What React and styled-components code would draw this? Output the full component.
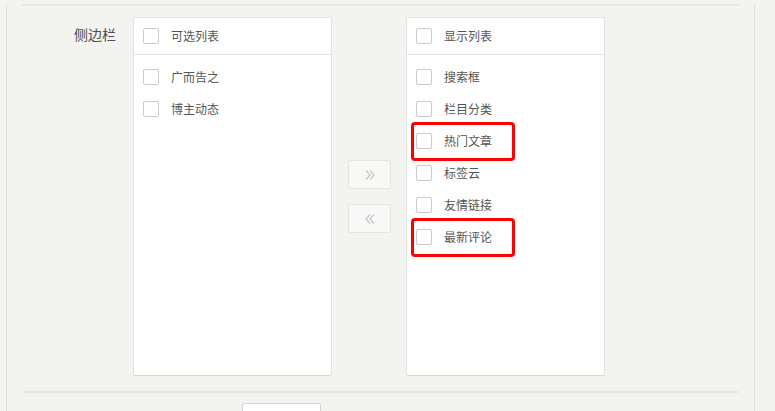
import React from 'react';
import styled, {createGlobalStyle} from 'styled-components';

const GlobalStyle = createGlobalStyle`
  html, body {
    margin: 0;
    padding: 0;
    background: #f3f3ef;
    font-family: "Noto Sans CJK SC", "Noto Sans", sans-serif;
    overflow: hidden;
  }
`

const Page = styled.div`
  height: 411px;
  overflow: hidden;
  background: #f3f3ef;
`

const Card = styled.div`
  margin-left: 6px;
  width: 717px;
  height: 100%;
  padding: 0 15px;
  border-left: 1px solid #e0e0dc;
  border-right: 1px solid #e0e0dc;
`

const Rule = styled.div`
  height: 2px;
  background: #e6e6e2;
  margin-top: ${({top}) => top}px;
`

const FormRow = styled.div`
  display: flex;
  align-items: flex-start;
  padding-top: 11px;
`

const Label = styled.div`
  width: 94px;
  text-align: right;
  font-size: 14px;
  color: #505050;
  line-height: 20px;
  padding-top: 7px;
  margin-right: 17px;
`

const Transfer = styled.div`
  display: flex;
  align-items: center;
`

const Panel = styled.div`
  width: 197px;
  height: 357px;
  background: #fff;
  border: 1px solid #e2e2e0;
  border-bottom-color: #d4d4d2;
  border-radius: 2px;
  display: flex;
  flex-direction: column;
`

const PanelHeader = styled.div`
  height: 36px;
  display: flex;
  align-items: center;
  padding-left: 9px;
  border-bottom: 1px solid #e4e4e4;
`

const List = styled.div`
  padding-top: 6px;
  display: flex;
  flex-direction: column;
`

const Item = styled.div`
  position: relative;
  height: 32px;
  display: flex;
  align-items: center;
  padding-left: 9px;
`

const Box = styled.span`
  width: 16px;
  height: 16px;
  box-sizing: border-box;
  border: 1px solid #cccccc;
  border-radius: 2px;
  background: #fff;
  flex-shrink: 0;
`

const Text = styled.span`
  margin-left: 12px;
  font-size: 12px;
  color: #555;
  line-height: 16px;
`

const Mark = styled.div`
  position: absolute;
  left: 4px;
  top: -3px;
  width: 98px;
  height: 33px;
  border: 3px solid #f00;
  border-radius: 4px;
  pointer-events: none;
`

const Arrows = styled.div`
  display: flex;
  flex-direction: column;
  gap: 15px;
  margin: 0 15px 0 16px;
`

const ArrowButton = styled.div`
  width: 41px;
  height: 27px;
  border: 1px solid #e4e4e2;
  border-radius: 2px;
  background: #f8f8f6;
  display: flex;
  align-items: center;
  justify-content: center;
`

const Footer = styled.div`
  padding: 10px 0 0 220px;
`

const Button = styled.div`
  width: 77px;
  height: 30px;
  background: #fff;
  border: 1px solid #d2d2d0;
  border-radius: 2px;
`

const Chevrons = ({flip}) => (
  <svg width="12" height="12" viewBox="0 0 12 12" style={flip ? {transform: 'scaleX(-1)'} : undefined}>
    <path d="M2 1.5 L6 6 L2 10.5 M6 1.5 L10 6 L6 10.5" fill="none" stroke="#b8b8b8" strokeWidth="1.1" />
  </svg>
)

const source = ['广而告之', '博主动态'];
const target = [
  {name: '搜索框'},
  {name: '栏目分类'},
  {name: '热门文章', marked: true},
  {name: '标签云'},
  {name: '友情链接'},
  {name: '最新评论', marked: true},
];

const App = () => (
  <Page>
    <GlobalStyle />
    <Card>
      <Rule top={4} />
      <FormRow>
        <Label>侧边栏</Label>
        <Transfer>
          <Panel>
            <PanelHeader><Box /><Text>可选列表</Text></PanelHeader>
            <List>
              {source.map((name) => (
                <Item key={name}><Box /><Text>{name}</Text></Item>
              ))}
            </List>
          </Panel>
          <Arrows>
            <ArrowButton><Chevrons /></ArrowButton>
            <ArrowButton><Chevrons flip /></ArrowButton>
          </Arrows>
          <Panel>
            <PanelHeader><Box /><Text>显示列表</Text></PanelHeader>
            <List>
              {target.map(({name, marked}) => (
                <Item key={name}>
                  <Box /><Text>{name}</Text>
                  {marked && <Mark />}
                </Item>
              ))}
            </List>
          </Panel>
        </Transfer>
      </FormRow>
      <Rule top={15} />
      <Footer><Button /></Footer>
    </Card>
  </Page>
);

export default App;
